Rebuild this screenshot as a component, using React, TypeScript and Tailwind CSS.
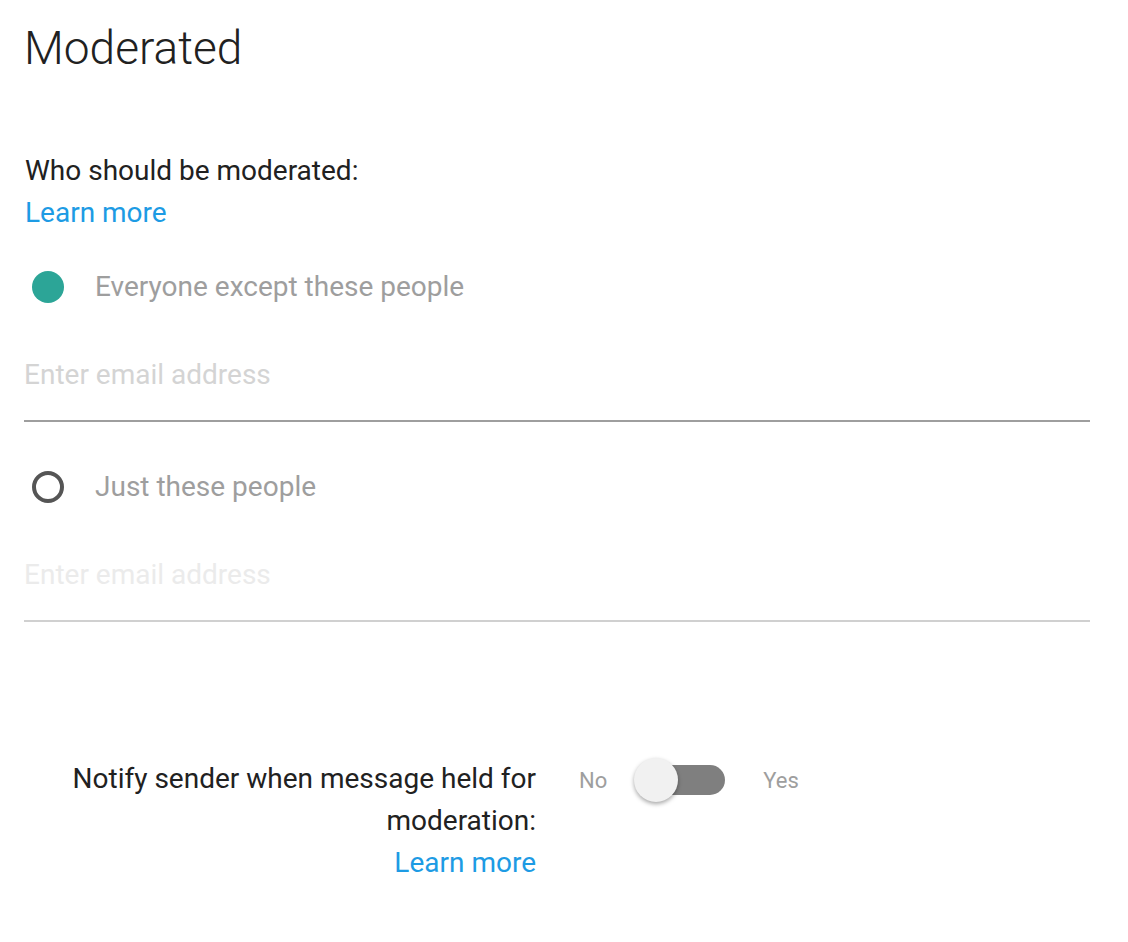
import React, { useState } from 'react';

const font = { fontFamily: 'Roboto, "Noto Sans", sans-serif' };

const Radio = ({ checked, label, onClick }: { checked: boolean; label: string; onClick: () => void }) => (
  <button onClick={onClick} className="flex items-center h-[42px] text-left">
    <span className="w-[48px] flex justify-center">
      {checked ? (
        <span className="w-[32px] h-[32px] rounded-full bg-[#2ca597]" />
      ) : (
        <span className="w-[32px] h-[32px] rounded-full border-[4px] border-[#555555]" />
      )}
    </span>
    <span className="ml-[23px] text-[28px] leading-[42px] text-[#9e9e9e]">{label}</span>
  </button>
);

const EmailInput = ({ disabled }: { disabled?: boolean }) => (
  <div className={`w-[1066px] pb-[24px] border-b-2 ${disabled ? 'border-[#d0d0d0]' : 'border-[#9e9e9e]'}`}>
    <input
      disabled={disabled}
      placeholder="Enter email address"
      className={`w-full bg-transparent outline-none text-[28px] leading-[42px] h-[42px] ${
        disabled ? 'placeholder:text-[#ebebeb]' : 'placeholder:text-[#d4d4d4]'
      }`}
    />
  </div>
);

export default function App() {
  const [mode, setMode] = useState<'except' | 'just'>('except');
  const [notify, setNotify] = useState(false);

  return (
    <div style={font} className="min-h-screen bg-white text-[#212121] pl-[24px] pt-[20px]">
      <h1 className="text-[46px] leading-[56px] font-light">Moderated</h1>

      <div className="mt-[74px] pl-px">
        <p className="text-[28px] leading-[42px]">Who should be moderated:</p>
        <a href="#" className="block text-[28px] leading-[42px] text-[#1d9be4] w-fit">Learn more</a>
      </div>

      <div className="mt-[32px]">
        <Radio checked={mode === 'except'} label="Everyone except these people" onClick={() => setMode('except')} />
      </div>
      <div className="mt-[46px]">
        <EmailInput disabled={mode !== 'except'} />
      </div>

      <div className="mt-[44px]">
        <Radio checked={mode === 'just'} label="Just these people" onClick={() => setMode('just')} />
      </div>
      <div className="mt-[46px]">
        <EmailInput disabled={mode !== 'just'} />
      </div>

      <div className="mt-[136px] flex items-start">
        <div className="w-[512px] text-right text-[28px] leading-[42px]">
          <p>Notify sender when message held for moderation:</p>
          <a href="#" className="text-[#1d9be4]">Learn more</a>
        </div>
        <div className="flex items-center h-[42px] mt-px ml-[43px]">
          <span className="text-[22px] text-[#9e9e9e]">No</span>
          <button
            onClick={() => setNotify(!notify)}
            className="relative ml-[27px] w-[91px] h-[44px]"
          >
            <span className="absolute left-[7px] right-0 top-[7px] h-[30px] rounded-full bg-[#7f7f7f]" />
            <span
              className={`absolute top-0 w-[44px] h-[44px] rounded-full bg-[#f1f1f1] shadow-[0_2px_4px_rgba(0,0,0,0.35)] ${
                notify ? 'right-0' : 'left-0'
              }`}
            />
          </button>
          <span className="ml-[38px] text-[22px] text-[#9e9e9e]">Yes</span>
        </div>
      </div>
    </div>
  );
}
